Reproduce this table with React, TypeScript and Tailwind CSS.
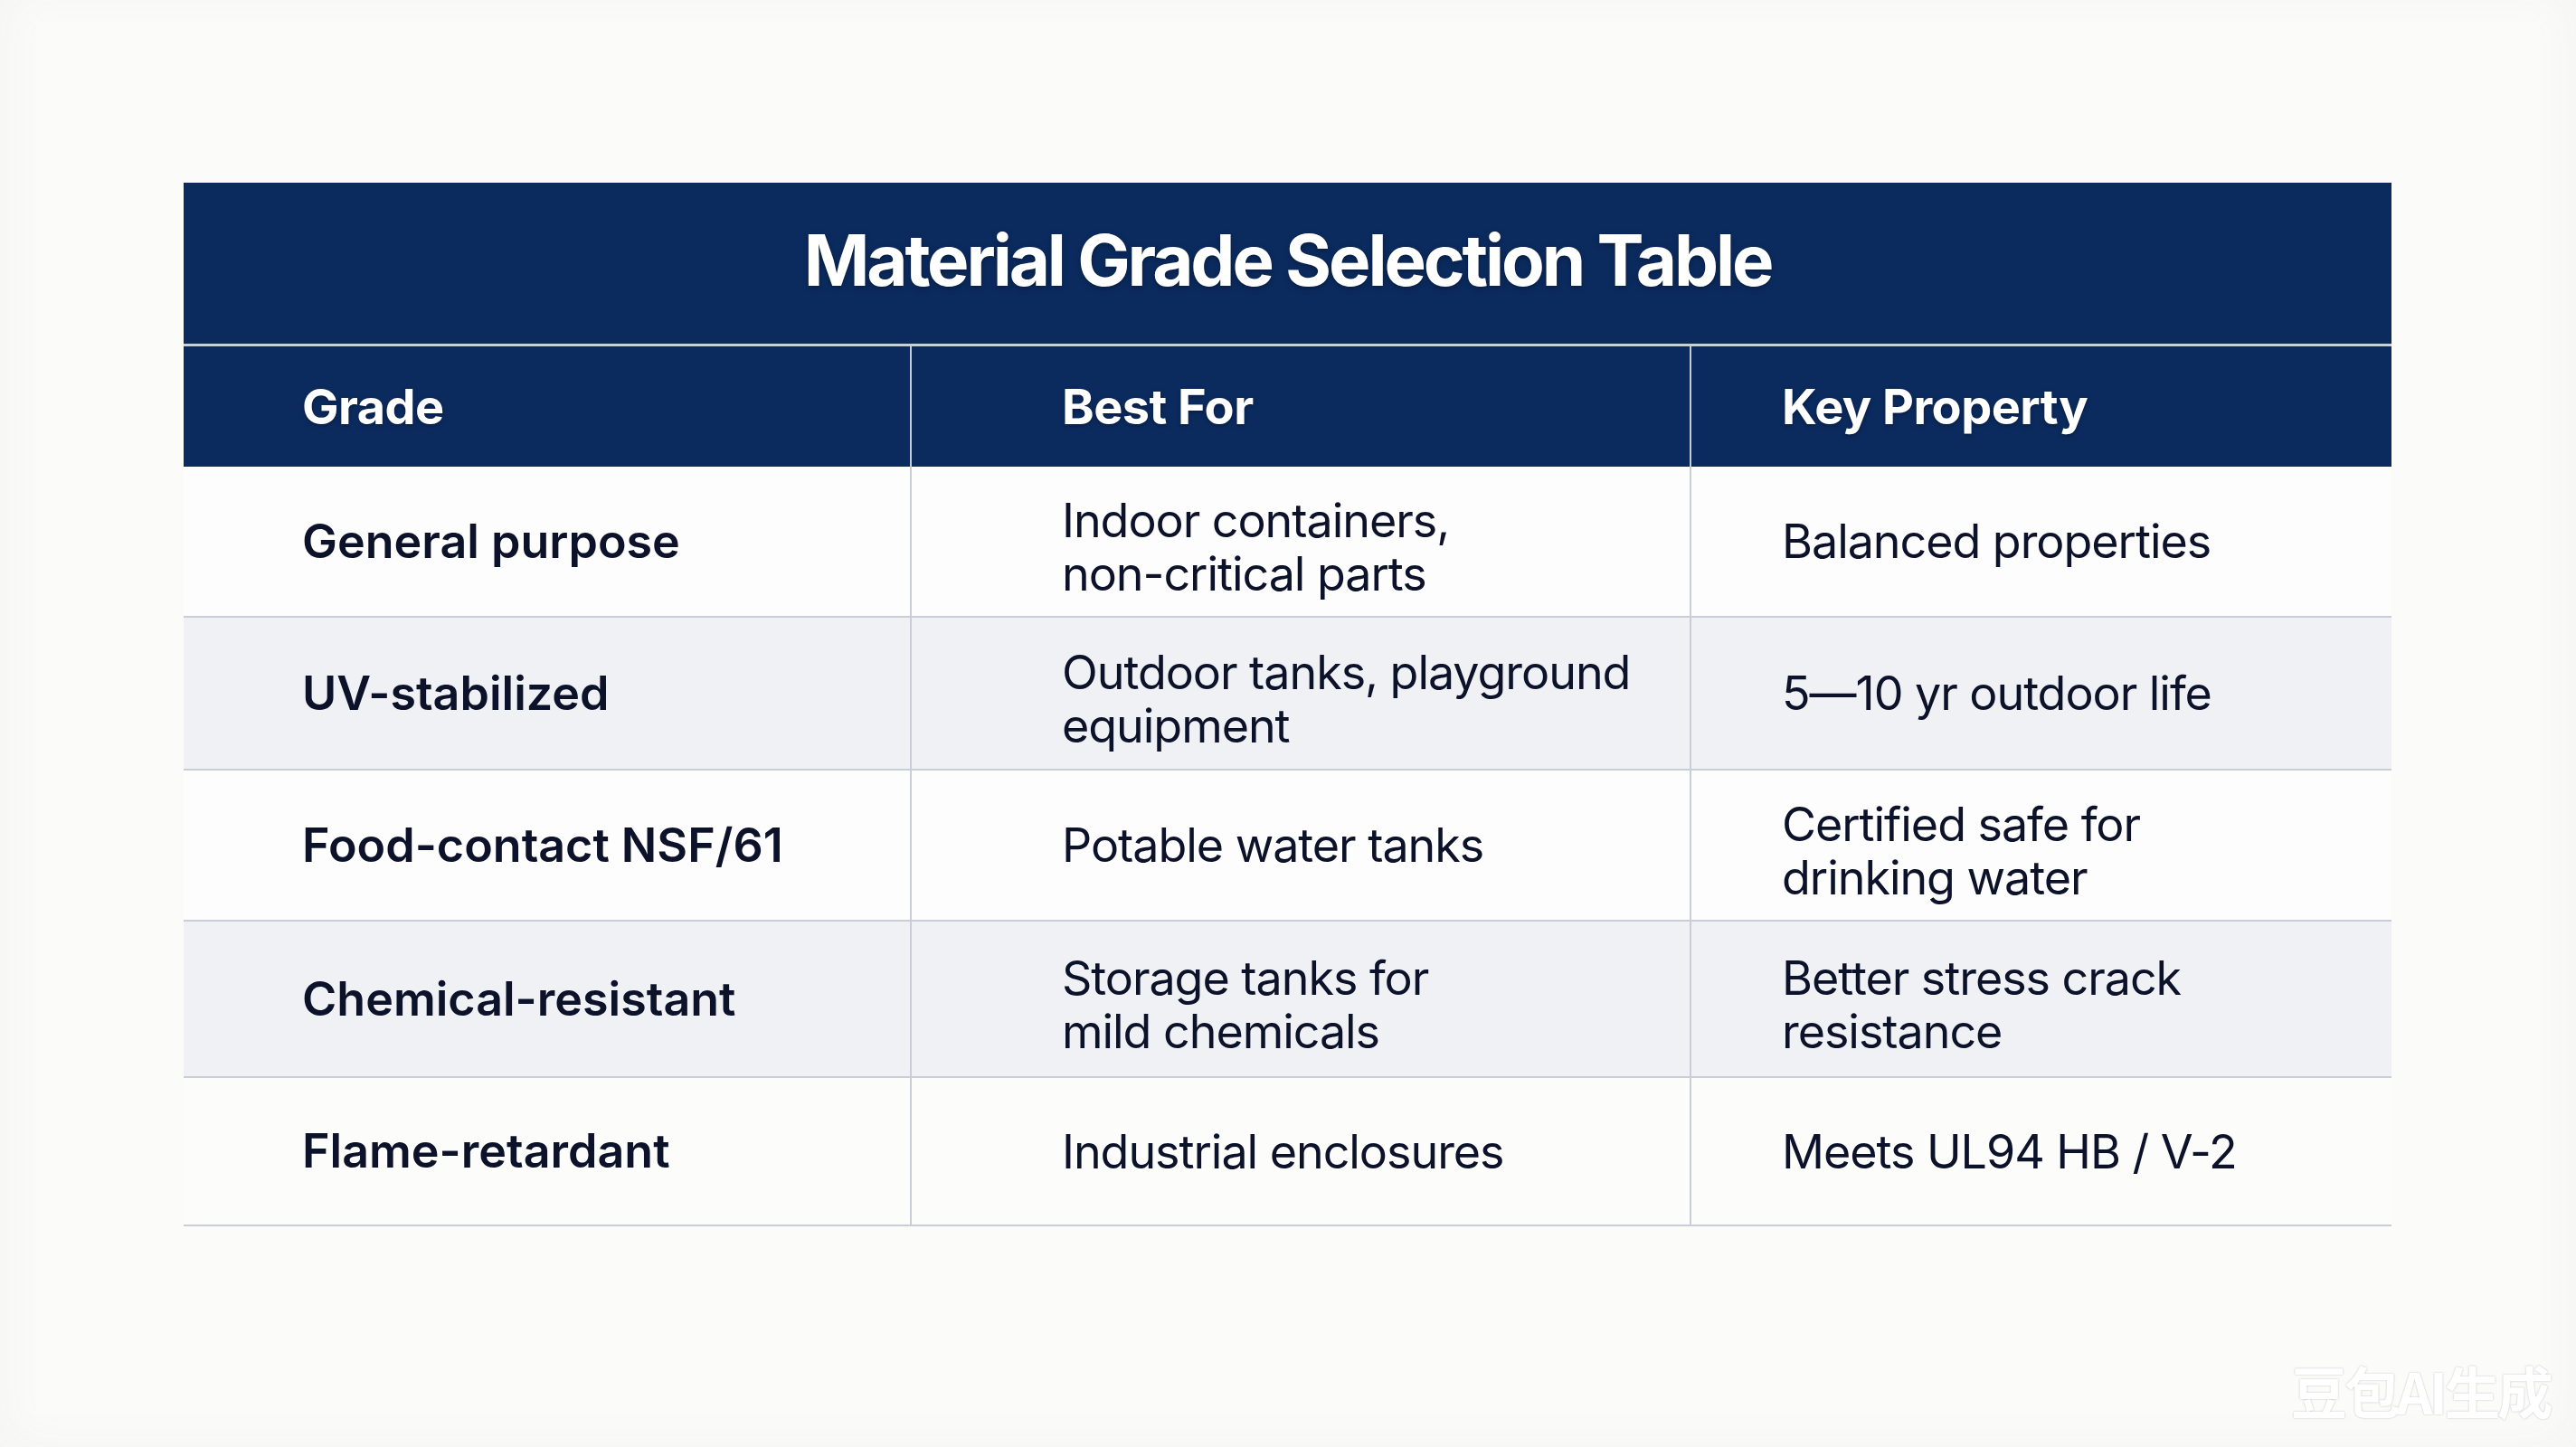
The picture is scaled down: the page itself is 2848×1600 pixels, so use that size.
const rows = [
  { grade: "General purpose", bestFor: ["Indoor containers,", "non-critical parts"], key: ["Balanced properties"], bg: "bg-[#fdfdfd]", h: "h-[167px]" },
  { grade: "UV-stabilized", bestFor: ["Outdoor tanks, playground", "equipment"], key: ["5\u201410 yr outdoor life"], bg: "bg-[#eff1f4]", h: "h-[169px]" },
  { grade: "Food-contact NSF/61", bestFor: ["Potable water tanks"], key: ["Certified safe for", "drinking water"], bg: "bg-[#fdfdfd]", h: "h-[167px]" },
  { grade: "Chemical-resistant", bestFor: ["Storage tanks for", "mild chemicals"], key: ["Better stress crack", "resistance"], bg: "bg-[#eff1f4]", h: "h-[173px]" },
  { grade: "Flame-retardant", bestFor: ["Industrial enclosures"], key: ["Meets UL94 HB / V-2"], bg: "bg-[#fcfcfb]", h: "h-[164px]" },
];

function Lines({ lines }: { lines: string[] }) {
  // two-line cells sit a touch below centre in the reference
  const offset = lines.length > 1 ? "pt-[12px]" : "";
  return (
    <div className={`leading-[59px] tracking-[-0.02em] ${offset}`}>
      {lines.map((l) => (
        <div key={l}>{l}</div>
      ))}
    </div>
  );
}

export default function App() {
  return (
    <div className="relative h-[1600px] w-[2848px] overflow-hidden bg-[#f5f5f3] font-['Inter',sans-serif]">
      <div className="mx-[40px] my-[24px] h-[1540px] bg-[#fbfbfa] pt-[178px] pl-[163px] shadow-[0_0_50px_30px_#fbfbfa]">
        <div className="w-[2441px]">
          {/* title */}
          <div className="flex h-[181px] items-center justify-center border-b-[3px] border-[#c9d0dc] bg-[#0b2b5f] pb-[8px]">
            <h1 className="text-[78px] font-bold tracking-[-0.04em] text-white [text-shadow:0_2px_6px_rgba(0,0,0,0.35)]">
              Material Grade Selection Table
            </h1>
          </div>

          {/* header row */}
          <div className="grid h-[133px] grid-cols-[805px_862px_774px] bg-[#0b2b5f] text-[54px] font-bold tracking-[-0.01em] text-white [text-shadow:0_2px_5px_rgba(0,0,0,0.35)]">
            <div className="flex items-center border-r-2 border-[#c4cbd8] pl-[131px]">Grade</div>
            <div className="flex items-center border-r-2 border-[#c4cbd8] pl-[166px]">Best For</div>
            <div className="flex items-center pl-[100px]">Key Property</div>
          </div>

          {/* body rows */}
          {rows.map((r) => (
            <div
              key={r.grade}
              className={`grid grid-cols-[805px_862px_774px] border-b-2 border-[#c8cdd7] text-[52px] text-[#0c1229] ${r.h} ${r.bg}`}
            >
              <div className="flex items-center border-r-2 border-[#c8cdd7] pl-[131px] font-semibold">{r.grade}</div>
              <div className="flex items-center border-r-2 border-[#c8cdd7] pl-[166px]">
                <Lines lines={r.bestFor} />
              </div>
              <div className="flex items-center pl-[100px]">
                <Lines lines={r.key} />
              </div>
            </div>
          ))}
        </div>
      </div>

      {/* watermark */}
      <div className="absolute right-[29px] bottom-[32px] font-['Noto_Sans_CJK_SC',sans-serif] text-[62px] font-bold leading-none tracking-[-0.06em] text-white [text-shadow:0_0_2px_#b9b9b9]">
        豆包AI生成
      </div>
    </div>
  );
}
